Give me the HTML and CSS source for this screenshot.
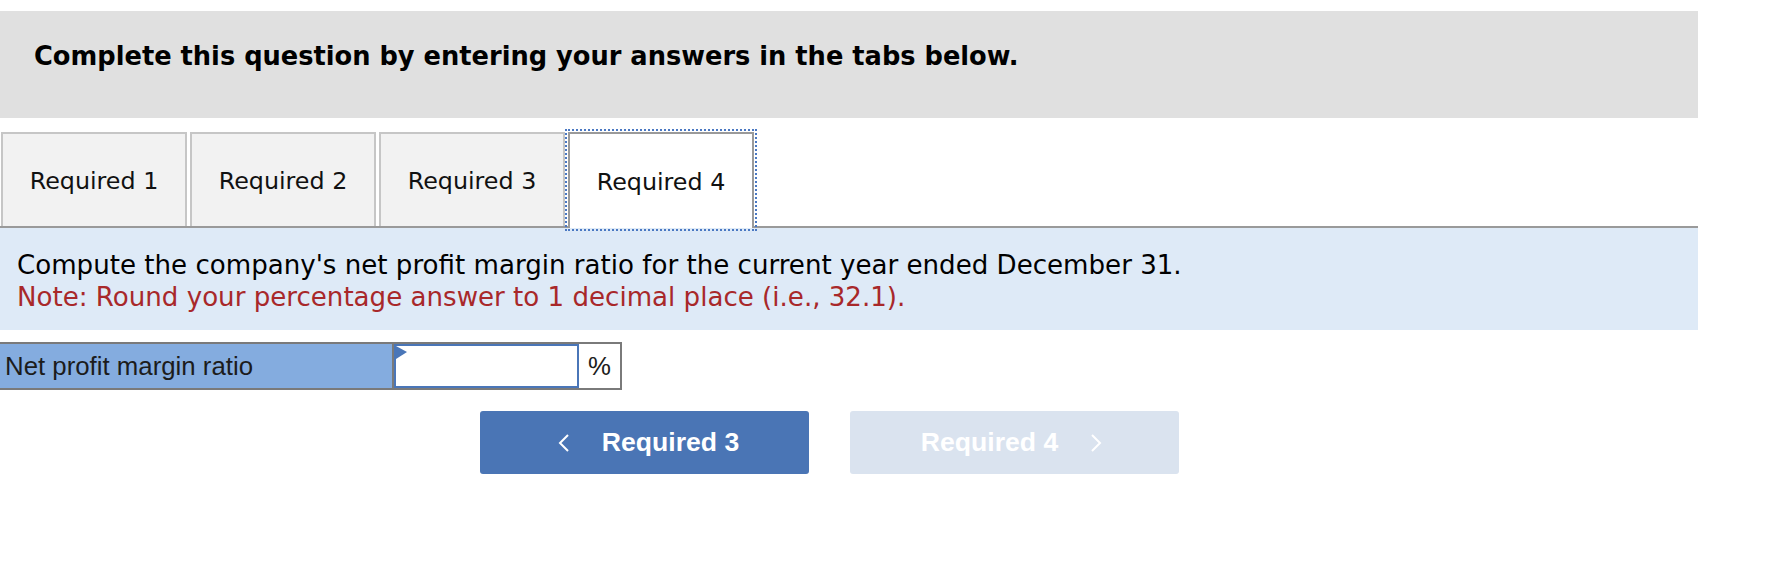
FILE: index.html
```html
<!DOCTYPE html>
<html lang="en">
<head>
<meta charset="utf-8">
<title>Required 4</title>
<link rel="stylesheet" href="styles.css">
</head>
<body>
<div class="page">
  <div class="banner">Complete this question by entering your answers in the tabs below.</div>

  <div class="tabs">
    <div class="tab">Required 1</div>
    <div class="tab">Required 2</div>
    <div class="tab">Required 3</div>
    <div class="tab tab-active">Required 4</div>
  </div>

  <div class="panel">
    <div class="question">Compute the company's net profit margin ratio for the current year ended December 31.</div>
    <div class="note">Note: Round your percentage answer to 1 decimal place (i.e., 32.1).</div>
  </div>

  <div class="answer-row">
    <div class="answer-label">Net profit margin ratio</div>
    <div class="answer-input">
      <svg class="flag" width="11" height="14" viewBox="0 0 11 14"><polygon points="0,0 11,6 0,13" fill="#4a76b8"/></svg>
    </div>
    <div class="answer-unit">%</div>
  </div>

  <div class="nav">
    <div class="btn btn-prev">
      <svg class="chev" width="12" height="18" viewBox="0 0 12 18"><polyline points="10,1 2,9 10,17" fill="none" stroke="#ffffff" stroke-width="2"/></svg>
      <span>Required 3</span>
    </div>
    <div class="btn btn-next">
      <span>Required 4</span>
      <svg class="chev" width="12" height="18" viewBox="0 0 12 18"><polyline points="2,1 10,9 2,17" fill="none" stroke="#ffffff" stroke-width="2"/></svg>
    </div>
  </div>
</div>
</body>
</html>
```
FILE: styles.css
```css
html, body {
  margin: 0;
  padding: 0;
  background: #ffffff;
}

.page {
  width: 1698px;
  padding-top: 11px;
}

.banner {
  background: #e0e0e0;
  height: 107px;
  box-sizing: border-box;
  padding: 30px 0 0 34px;
  font-family: "DejaVu Sans", Verdana, sans-serif;
  font-weight: bold;
  font-size: 25.7px;
  line-height: 31px;
  color: #000000;
}

.tabs {
  display: flex;
  gap: 3px;
  margin-top: 14px;
  padding-left: 1px;
  height: 94px;
  position: relative;
  z-index: 1;
}

.tab {
  width: 186px;
  box-sizing: border-box;
  height: 94px;
  background: #f2f2f2;
  border: 2px solid #c6c6c6;
  border-bottom: none;
  display: flex;
  align-items: center;
  justify-content: center;
  padding-top: 2px;
  font-family: "DejaVu Sans", Verdana, sans-serif;
  font-size: 23.8px;
  color: #111111;
}

.tab-active {
  background: #ffffff;
  border-color: #9a9a9a;
  height: 96px;
  outline: 2px dotted #4a78c2;
  outline-offset: 1px;
}

.panel {
  border-top: 2px solid #9a9a9a;
  background: #deeaf7;
  box-sizing: border-box;
  height: 104px;
  padding: 21px 0 0 17px;
  font-family: "DejaVu Sans", Verdana, sans-serif;
  font-size: 26.1px;
  line-height: 32px;
}

.question {
  color: #000000;
}

.note {
  color: #a8282a;
}

.answer-row {
  display: flex;
  margin-top: 12px;
  height: 48px;
  box-sizing: border-box;
  width: 622px;
  border: 2px solid #7a7a7a;
  border-left: none;
}

.answer-label {
  width: 394px;
  box-sizing: border-box;
  border-right: 2px solid #7a7a7a;
  background: #84acdf;
  padding-left: 5px;
  display: flex;
  align-items: center;
  font-family: "Liberation Sans", Arial, sans-serif;
  font-size: 25.8px;
  color: #1c1c1c;
}

.answer-input {
  width: 185px;
  box-sizing: border-box;
  border: 2px solid #4a76b8;
  background: #ffffff;
  position: relative;
}

.flag {
  position: absolute;
  left: 0;
  top: 0;
  display: block;
}

.answer-unit {
  flex: 1;
  display: flex;
  align-items: center;
  justify-content: center;
  font-family: "Liberation Sans", Arial, sans-serif;
  font-size: 25.8px;
  color: #1c1c1c;
  background: #ffffff;
}

.nav {
  display: flex;
  gap: 41px;
  margin-top: 21px;
  margin-left: 480px;
}

.btn {
  width: 329px;
  height: 63px;
  border-radius: 3px;
  display: flex;
  align-items: center;
  justify-content: center;
  gap: 32px;
  box-sizing: border-box;
  font-family: "Liberation Sans", Arial, sans-serif;
  font-weight: bold;
  font-size: 26.6px;
  color: #ffffff;
}

.btn-prev {
  background: #4a75b5;
  padding-left: 8px;
}

.btn-next {
  background: #dae3ef;
  padding-right: 6px;
}

.chev {
  display: block;
}
```
